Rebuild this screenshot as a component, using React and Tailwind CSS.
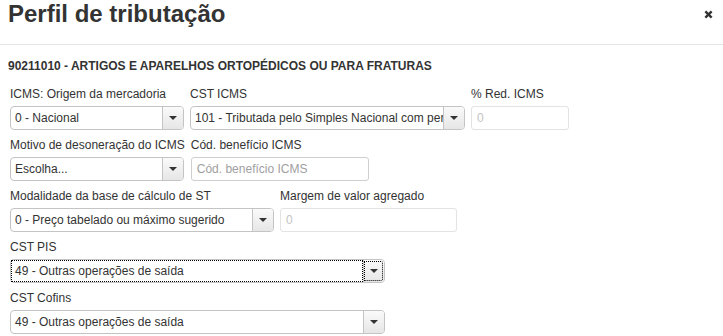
import React from 'react';

const Caret = () => (
  <svg width="8" height="4" viewBox="0 0 8 4" className="block">
    <path d="M0 0 L8 0 L4 4 Z" fill="#333" />
  </svg>
);

const Select = ({ value, width, focused }) => (
  <div
    className={`flex h-6 rounded-[4px] border bg-white ${
      focused ? 'border-[#c4c4c4]' : 'border-[#c4c4c4]'
    }`}
    style={{ width }}
  >
    <div
      className={`flex-1 min-w-0 flex items-center pl-[4px] overflow-hidden whitespace-nowrap text-[12px] text-[#333] ${
        focused ? 'outline-1 outline-dotted outline-black -outline-offset-1' : ''
      }`}
    >
      {value}
    </div>
    <div
      className={`w-[21px] shrink-0 flex items-center justify-center border-l border-[#c4c4c4] rounded-r-[3px] bg-gradient-to-b from-[#fafafa] to-[#e6e6e6] ${
        focused ? 'outline-1 outline-dotted outline-black -outline-offset-2' : ''
      }`}
    >
      <Caret />
    </div>
  </div>
);

const Input = ({ placeholder, width, disabled }) => (
  <div
    className={`flex items-center h-6 rounded-[3px] border pl-[5px] text-[12px] ${
      disabled ? 'border-[#e3e3e3] text-[#c4c4c4]' : 'border-[#cfcfcf] text-[#a0a0a0]'
    } bg-white`}
    style={{ width }}
  >
    {placeholder}
  </div>
);

const Field = ({ label, children }) => (
  <div className="flex flex-col">
    <label className="h-4 leading-4 text-[12px] text-[#333] whitespace-nowrap mb-1">{label}</label>
    {children}
  </div>
);

export default function App() {
  return (
    <div className="w-[723px] h-[336px] bg-white overflow-hidden font-['Liberation_Sans',Arial,sans-serif]">
      <div className="h-[45px] border-b border-[#e5e5e5] flex justify-between px-2">
        <h1 className="text-[24px] leading-[28px] font-bold text-[#333]">Perfil de tributação</h1>
        <svg width="9" height="9" viewBox="0 0 10 10" className="mt-[10px] mr-[2px]">
          <path d="M1.5 1.5 L8.5 8.5 M8.5 1.5 L1.5 8.5" stroke="#333" strokeWidth="2.6" />
        </svg>
      </div>
      <div className="px-2 pt-[13px] text-[12px] leading-4 font-bold text-[#333]">
        90211010 - ARTIGOS E APARELHOS ORTOPÉDICOS OU PARA FRATURAS
      </div>
      <div className="pl-[10px] pt-[12px] flex flex-col gap-[7px]">
        <div className="flex gap-[6px]">
          <Field label="ICMS: Origem da mercadoria">
            <Select value="0 - Nacional" width={174} />
          </Field>
          <Field label="CST ICMS">
            <Select value="101 - Tributada pelo Simples Nacional com permissão de crédito" width={275} />
          </Field>
          <Field label="% Red. ICMS">
            <Input placeholder="0" width={98} disabled />
          </Field>
        </div>
        <div className="flex gap-[6px]">
          <Field label="Motivo de desoneração do ICMS">
            <Select value="Escolha..." width={174} />
          </Field>
          <Field label="Cód. benefício ICMS">
            <Input placeholder="Cód. benefício ICMS" width={178} />
          </Field>
        </div>
        <div className="flex gap-[6px]">
          <Field label="Modalidade da base de cálculo de ST">
            <Select value="0 - Preço tabelado ou máximo sugerido" width={264} />
          </Field>
          <Field label="Margem de valor agregado">
            <Input placeholder="0" width={177} disabled />
          </Field>
        </div>
        <Field label="CST PIS">
          <Select value="49 - Outras operações de saída" width={375} focused />
        </Field>
        <Field label="CST Cofins">
          <Select value="49 - Outras operações de saída" width={375} />
        </Field>
      </div>
    </div>
  );
}
